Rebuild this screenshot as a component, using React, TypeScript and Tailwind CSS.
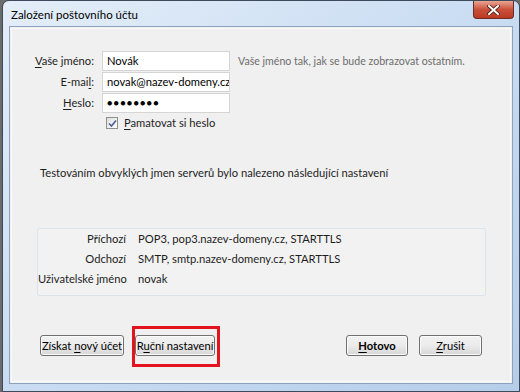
import React from "react";

const font = { fontFamily: 'Lato, "Noto Sans", sans-serif' };

function U({ children }: { children: React.ReactNode }) {
  return <span className="underline underline-offset-2">{children}</span>;
}

function Btn({ children, w }: { children: React.ReactNode; w: string }) {
  return (
    <div
      className={`h-[21px] ${w} rounded-[3px] border border-[#707070] bg-gradient-to-b from-[#f2f2f2] via-[#ebebeb] to-[#d6d6d6] flex items-center justify-center text-black whitespace-nowrap shadow-[inset_0_0_0_1px_#fcfcfc]`}
    >
      {children}
    </div>
  );
}

export default function App() {
  return (
    <div className="w-[520px] h-[392px] bg-[#6b6b6b] overflow-hidden text-[11.2px] leading-[18px]" style={font}>
      <div className="ml-[2px] w-[518px] h-[392px] rounded-t-[7px] border border-[#3c4a5c] bg-gradient-to-br from-[#e4eef9] via-[#c9dcf2] to-[#b6cde9] flex flex-col">
        {/* title bar */}
        <div className="h-[25px] flex items-start justify-between">
          <div className="pl-[8px] pt-[5px] text-[11.5px] text-black whitespace-nowrap">Založení poštovního účtu</div>
          <div className="mr-[5px] w-[41px] h-[18px] rounded-b-[4px] border border-t-0 border-[#6d2b24] bg-gradient-to-b from-[#e8a593] via-[#c9503b] to-[#bb3a22] flex items-center justify-center">
            <svg width="13" height="10" viewBox="0 0 13 10">
              <path d="M2 1 L11 9 M11 1 L2 9" stroke="#4a1c16" strokeWidth="3.6" strokeLinecap="square" />
              <path d="M2 1 L11 9 M11 1 L2 9" stroke="#ffffff" strokeWidth="2" strokeLinecap="square" />
            </svg>
          </div>
        </div>
        {/* client */}
        <div className="mx-[6px] mb-[7px] flex-1 border border-[#8da2bd] bg-[#f0f0f0] p-[1px]">
          <div className="h-full border border-[#ffffff]/60 flex flex-col">
            {/* form */}
            <div className="mt-[22px] grid grid-cols-[90px_128px_1fr] gap-y-[1px] items-center">
              <div className="text-right pr-[8px] text-[#1e1e1e] whitespace-nowrap">
                <U>V</U>aše jméno:
              </div>
              <div className="h-[20px] border border-[#d5d5d5] bg-white px-[4px] leading-[18px] text-black">Novák</div>
              <div className="pl-[8px] text-[10.6px] text-[#6d6d6d] whitespace-nowrap">
                Vaše jméno tak, jak se bude zobrazovat ostatním.
              </div>

              <div className="text-right pr-[8px] text-[#1e1e1e] whitespace-nowrap">
                E-mai<U>l</U>:
              </div>
              <div className="h-[20px] border border-[#d5d5d5] bg-white px-[4px] leading-[18px] text-black whitespace-nowrap overflow-hidden">
                novak@nazev-domeny.cz
              </div>
              <div />

              <div className="text-right pr-[8px] text-[#1e1e1e] whitespace-nowrap">
                <U>H</U>eslo:
              </div>
              <div className="h-[20px] border border-[#d5d5d5] bg-white px-[4px] leading-[18px] text-black text-[9px] tracking-[1.2px] whitespace-nowrap">
                ●●●●●●●●
              </div>
              <div />

              <div />
              <div className="h-[16px] mt-[1px] flex items-center gap-[6px] pl-[4px] text-[#1e1e1e] whitespace-nowrap">
                <div className="w-[12px] h-[12px] border border-[#8e8f8f] bg-gradient-to-br from-[#dedede] to-[#ffffff] flex items-center justify-center">
                  <svg width="9" height="9" viewBox="0 0 9 9">
                    <path d="M1 4.5 L3.5 7 L8 1.5" stroke="#4a5f97" strokeWidth="1.6" fill="none" />
                  </svg>
                </div>
                <span>
                  <U>P</U>amatovat si heslo
                </span>
              </div>
              <div />
            </div>

            <div className="mt-[33px] ml-[28px] text-[#1e1e1e] whitespace-nowrap">
              Testováním obvyklých jmen serverů bylo nalezeno následující nastavení
            </div>

            {/* result box */}
            <div className="mt-[46px] ml-[25px] w-[449px] h-[68px] rounded-[2px] border border-[#dde3ea] bg-[#f2f2f2] grid grid-cols-[100px_1fr] auto-rows-[20px] text-[#1e1e1e] leading-[20px]">
              <div className="text-right pr-[12px] whitespace-nowrap">Příchozí</div>
              <div className="whitespace-nowrap">POP3, pop3.nazev-domeny.cz, STARTTLS</div>
              <div className="text-right pr-[12px] whitespace-nowrap">Odchozí</div>
              <div className="whitespace-nowrap">SMTP, smtp.nazev-domeny.cz, STARTTLS</div>
              <div className="text-right pr-[12px] whitespace-nowrap">Uživatelské jméno</div>
              <div className="whitespace-nowrap">novak</div>
            </div>

            {/* buttons */}
            <div className="mt-auto mb-[14px] ml-[28px] mr-[28px] flex items-start">
              <div className="mt-[9px]">
                <Btn w="w-[84px]">
                  <span>
                    Získat <U>n</U>ový účet
                  </span>
                </Btn>
              </div>
              <div className="ml-[8px] w-[88px] h-[41px] border-[3px] border-[#e3141e] pt-[6px]">
                <Btn w="w-[80px]">
                  <span>
                    R<U>u</U>ční nastavení
                  </span>
                </Btn>
              </div>
              <div className="ml-auto mt-[9px] flex gap-[11px]">
                <Btn w="w-[62px]">
                  <span className="font-bold">
                    <U>H</U>otovo
                  </span>
                </Btn>
                <Btn w="w-[63px]">
                  <span>
                    <U>Z</U>rušit
                  </span>
                </Btn>
              </div>
            </div>
          </div>
        </div>
      </div>
    </div>
  );
}
